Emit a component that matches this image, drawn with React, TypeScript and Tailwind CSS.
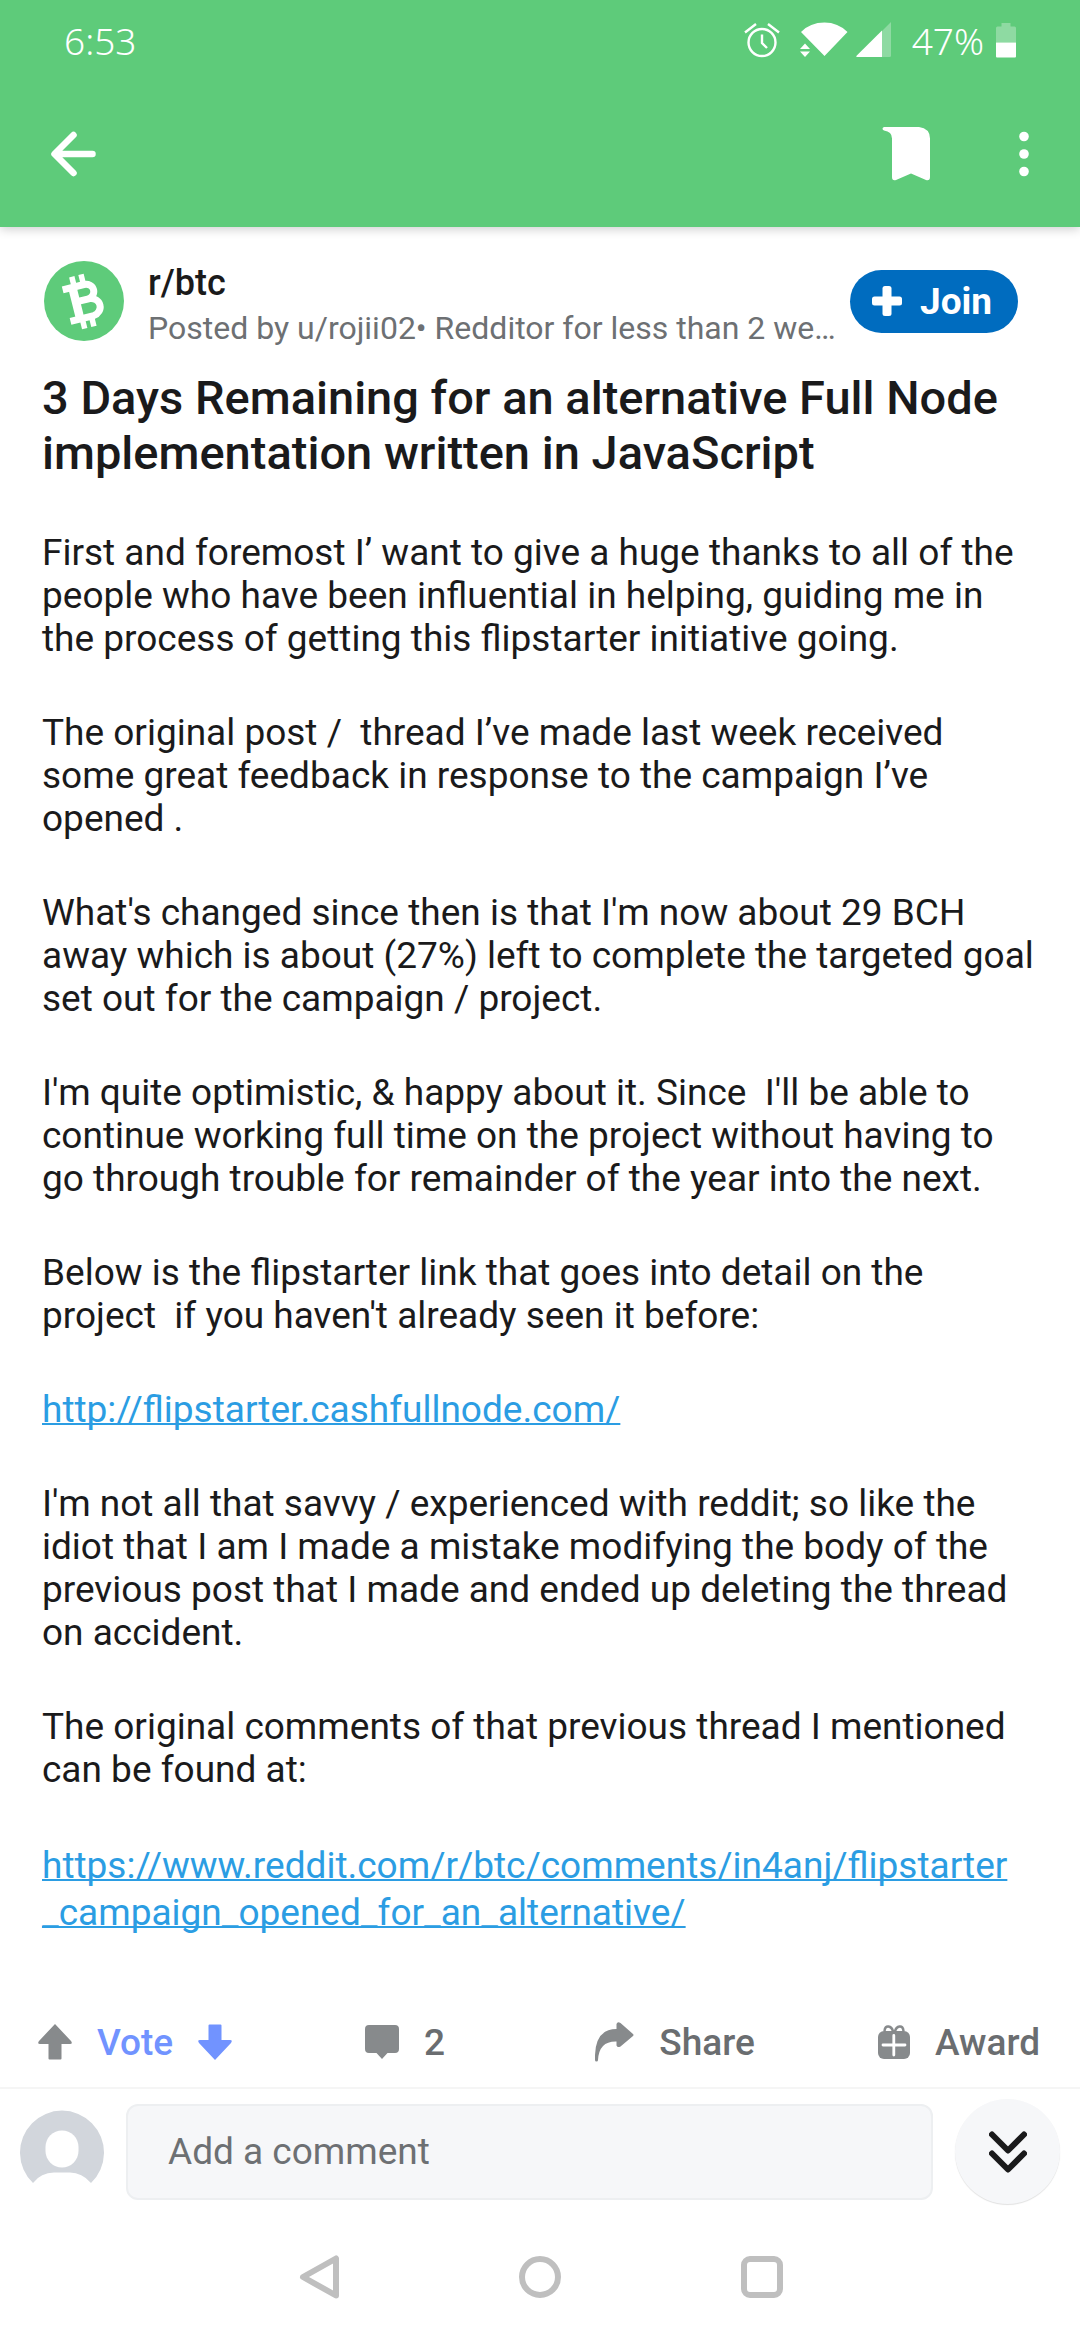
import React from "react";

const openingParagraphs = [
  "First and foremost I’ want to give a huge thanks to all of the people who have been influential in helping, guiding me in the process of getting this flipstarter initiative going.",
  "The original post /  thread I’ve made last week received some great feedback in response to the campaign I’ve opened .",
  "What's changed since then is that I'm now about 29 BCH away which is about (27%) left to complete the targeted goal set out for the campaign / project.",
  "I'm quite optimistic, & happy about it. Since  I'll be able to continue working full time on the project without having to go through trouble for remainder of the year into the next.",
  "Below is the flipstarter link that goes into detail on the project  if you haven't already seen it before:",
];

const closingParagraphs = [
  "I'm not all that savvy / experienced with reddit; so like the idiot that I am I made a mistake modifying the body of the previous post that I made and ended up deleting the thread on accident.",
  "The original comments of that previous thread I mentioned can be found at:",
];

function StatusBar() {
  return (
    <div className="flex h-20 items-center justify-between px-16 text-white">
      <time className="font-['Noto_Sans',sans-serif] text-[37px] font-light leading-none">6:53</time>
      <div className="flex items-center">
        <svg className="h-9 w-9" viewBox="0 0 36 36" fill="none" stroke="currentColor" strokeWidth="2.4" aria-label="Alarm">
          <circle cx="18" cy="20.5" r="13.5" />
          <path d="M18 12.500v8.500l5 5M1 10.500 12 2M35 10.500 24 2" />
        </svg>
        <svg className="ml-5 h-9 w-12" viewBox="0 0 48 36" fill="currentColor" aria-label="Wi-Fi">
          <path d="M1 10Q10 0.500 24.500 .5 38 0.500 47.500 10L24.500 34ZM0 27l5-5.500L10 27ZM0 29.500h10l-5 5.500Z" />
        </svg>
        <svg className="ml-2 h-9 w-9" viewBox="0 0 36 36" fill="currentColor" aria-label="Signal">
          <path d="M35 0v33.500a1.500 1.500 0 0 1-1.500 1.500H26V9Z" opacity=".3" />
          <path d="M26 8.500V35H1.500Q-.5 35 .8 33.500Z" />
        </svg>
        <span className="ml-5 font-['Noto_Sans',sans-serif] text-[37px] font-light leading-none">47%</span>
        <svg className="ml-3 h-9 w-5" viewBox="0 0 20 36" fill="currentColor" aria-label="Battery">
          <path d="M0 20.500V6q0-1.500 1.500-1.500H5.500V1h9v3.500h4Q20 4.500 20 6V20.500Z" opacity=".3" />
          <path d="M0 20.500h20v14q0 1-1 1H1q-1 0-1-1Z" />
        </svg>
      </div>
    </div>
  );
}

function AppBar() {
  return (
    <div className="flex h-[147px] items-center justify-between pl-12 pr-8 text-white">
      <button type="button" aria-label="Back" className="flex size-12 items-center">
        <svg className="size-12" viewBox="0 0 48 48" fill="none" stroke="currentColor" strokeWidth="6.500" strokeLinecap="round" strokeLinejoin="round">
          <path d="M44.500 24H7M25.500 5 6.500 24l19 19" />
        </svg>
      </button>
      <div className="flex items-center gap-[70px]">
        <button type="button" aria-label="Saved">
          <svg className="h-14 w-12" viewBox="0 0 48 56" fill="currentColor">
            <path d="M2 1H37Q48 2.500 48 12.500V51Q48 55 44 54L29 47.500 14 54Q10 55 10 51V12.500Q10 5.500 2 4.500Q-1 2.500 2 1Z" />
          </svg>
        </button>
        <button type="button" aria-label="More options" className="flex w-12 justify-center">
          <svg className="h-12 w-3" viewBox="0 0 12 48" fill="currentColor">
            <circle cx="6" cy="6.500" r="4.800" /><circle cx="6" cy="24" r="4.800" /><circle cx="6" cy="41.500" r="4.800" />
          </svg>
        </button>
      </div>
    </div>
  );
}

function PostHeader() {
  return (
    <div className="flex items-center pl-0.5">
      <svg className="size-20 shrink-0" viewBox="0 0 80 80" aria-label="r/btc">
        <circle cx="40" cy="40" r="40" fill="#5ecb7a" />
        <g transform="rotate(-14 40 40)" fill="none" stroke="#fff">
          <path d="M22 24H44a8 7.500 0 0 1 0 15H33M44 39h2a9.500 8.800 0 0 1 0 17.500H22" strokeWidth="7" />
          <path d="M32 23v34" strokeWidth="8.500" />
          <path d="M34 13.500v9M43.500 13.500v9M34 58v9M43.500 58v9" strokeWidth="5.500" />
        </g>
      </svg>
      <div className="ml-6 min-w-0 flex-1 pt-2">
        <div className="text-[36px] font-medium leading-[46px] text-[#1a1a1b]">r/btc</div>
        <div className="truncate text-[32px] leading-[44px] text-[#6d7073]">Posted by u/rojii02• Redditor for less than 2 weeks</div>
      </div>
      <button type="button" className="ml-3 mr-5 flex h-[63px] w-[168px] shrink-0 items-center rounded-full bg-[#006cbf] pl-[22px] text-[37px] font-bold leading-none text-white">
        <svg className="mr-[18px] size-[30px]" viewBox="0 0 30 30" fill="currentColor" aria-hidden="true">
          <rect x="10.500" width="9" height="30" rx="2.500" /><rect y="10.500" width="30" height="9" rx="2.500" />
        </svg>
        Join
      </button>
    </div>
  );
}

function ActionBar() {
  return (
    <div className="grid h-[90px] grid-cols-4 text-[37px] font-medium leading-none text-[#6a6d70]">
      <div className="flex items-center justify-center gap-[25px]">
        <button type="button" aria-label="Upvote">
          <svg className="h-9 w-[34px]" viewBox="0 0 34 36" fill="#878a8c"><path d="M17 0 33 17q2 3-1 3H23.500V34.500q0 1-1 1H11.500q-1 0-1-1V20H2Q-1 20 1 17Z" /></svg>
        </button>
        <span className="text-[#7193ff]">Vote</span>
        <button type="button" aria-label="Downvote">
          <svg className="h-9 w-[34px]" viewBox="0 0 34 36" fill="#7193ff"><path d="M17 36 33 19q2-3-1-3H23.500V1.500q0-1-1-1H11.500q-1 0-1 1V16H2Q-1 16 1 19Z" /></svg>
        </button>
      </div>
      <button type="button" aria-label="2 comments" className="flex items-center justify-center gap-[25px]">
        <svg className="h-[34px] w-[34px]" viewBox="0 0 34 34" fill="#878a8c"><path d="M4 0H30q4 0 4 4V24q0 4-4 4H22.500L17 34 11.500 28H4q-4 0-4-4V4Q0 0 4 0Z" /></svg>
        2
      </button>
      <button type="button" className="flex items-center justify-center gap-[25px]">
        <svg className="h-10 w-[39px]" viewBox="0 0 39 40" fill="#878a8c"><path d="M21.500 7V2q1-3 4-1L38 12q1 1 0 2L25.500 24.500q-3 1.500-4-1V19.500Q4 19 3 38q0 1.500-1.500 1.500T0 38Q-1 7 21.500 7Z" /></svg>
        Share
      </button>
      <button type="button" className="flex items-center justify-end gap-[25px] pr-10">
        <svg className="h-[34px] w-8" viewBox="0 0 32 34">
          <rect y="6" width="32" height="28" rx="6" fill="#878a8c" />
          <path d="M6.500 6Q7 1 10.500 1.500T15 6.500M25.500 6Q25 1 21.500 1.500T17 6.500" fill="none" stroke="#878a8c" strokeWidth="2.500" />
          <path d="M15.800 10.500V30M5 20H27" stroke="#fff" strokeWidth="2.800" strokeLinecap="round" />
        </svg>
        Award
      </button>
    </div>
  );
}

function CommentBar() {
  return (
    <div className="flex items-center gap-[22px] border-t-2 border-[#f5f5f5] px-5 py-[10px]">
      <svg className="size-[84px] shrink-0" viewBox="0 0 84 84" aria-label="Your avatar">
        <path d="M13 73A42 42 0 1 1 71 73Q62 62.500 50 62.500H34Q21 62.500 13 73Z" fill="#d2d6dc" />
        <rect x="25.500" y="20.500" width="33" height="37" rx="16.500" fill="#fff" />
      </svg>
      <input
        type="text"
        aria-label="Add a comment"
        placeholder="Add a comment"
        className="h-24 min-w-0 flex-1 rounded-xl border-2 border-[#edeff1] bg-[#f6f7f9] px-10 text-[37px] text-[#1a1a1b] placeholder:text-[#6d7073] outline-none"
      />
      <button type="button" aria-label="Next comment" className="flex size-[105px] shrink-0 items-center justify-center rounded-full bg-[#f6f7f9] shadow-[0_1px_1px_rgba(0,0,0,0.12)]">
        <svg className="h-[42px] w-[38px]" viewBox="0 0 38 42" fill="none" stroke="#1a1a1b" strokeWidth="6" strokeLinecap="round" strokeLinejoin="round">
          <path d="M3 3.500 19 19.500 35 3.500M3 22.500 19 38.500 35 22.500" />
        </svg>
      </button>
    </div>
  );
}

function SystemNav() {
  return (
    <nav className="flex h-[126px] items-center justify-center gap-[178px]">
      <button type="button" aria-label="System back">
        <svg className="size-11" viewBox="0 0 44 44" fill="none" stroke="#bfbfbf" strokeWidth="6" strokeLinejoin="round"><path d="M40 3.500V40.500L7 22Z" /></svg>
      </button>
      <button type="button" aria-label="Home">
        <svg className="size-11" viewBox="0 0 44 44" fill="none" stroke="#bfbfbf" strokeWidth="6"><circle cx="22" cy="22" r="18" /></svg>
      </button>
      <button type="button" aria-label="Recent apps">
        <svg className="size-11" viewBox="0 0 44 44" fill="none" stroke="#bfbfbf" strokeWidth="6"><rect x="4" y="4" width="36" height="36" rx="6" /></svg>
      </button>
    </nav>
  );
}

export default function App() {
  return (
    <div className="flex min-h-screen flex-col bg-white font-['Roboto',sans-serif]">
      <header className="bg-[#5ecb7a] shadow-[0_2px_10px_rgba(0,0,0,0.2)]">
        <StatusBar />
        <AppBar />
      </header>
      <main className="flex-1 px-[42px] pt-[25px]">
        <PostHeader />
        <h1 className="mt-5 text-[47px] font-medium leading-[55px] text-[#1a1a1b]">
          3 Days Remaining for an alternative Full Node implementation written in JavaScript
        </h1>
        <div className="mt-[51px] flex flex-col gap-[51px] text-[37px] leading-[43px] text-[#1a1a1b]">
          {openingParagraphs.map((text) => (
            <p key={text} className="whitespace-pre-wrap">{text}</p>
          ))}
          <p>
            <a href="http://flipstarter.cashfullnode.com/" className="text-[#2b9de3] underline decoration-2 [text-decoration-skip-ink:none]">
              http://flipstarter.cashfullnode.com/
            </a>
          </p>
          {closingParagraphs.map((text) => (
            <p key={text} className="whitespace-pre-wrap">{text}</p>
          ))}
          <p className="leading-[47px]">
            <a
              href="https://www.reddit.com/r/btc/comments/in4anj/flipstarter_campaign_opened_for_an_alternative/"
              className="text-[#2b9de3] underline decoration-2 [text-decoration-skip-ink:none]"
            >
              https://www.reddit.com/r/btc/comments/in4anj/flipstarter<wbr />_campaign_opened_for_an_alternative/
            </a>
          </p>
        </div>
      </main>
      <footer>
        <ActionBar />
        <CommentBar />
        <SystemNav />
      </footer>
    </div>
  );
}
